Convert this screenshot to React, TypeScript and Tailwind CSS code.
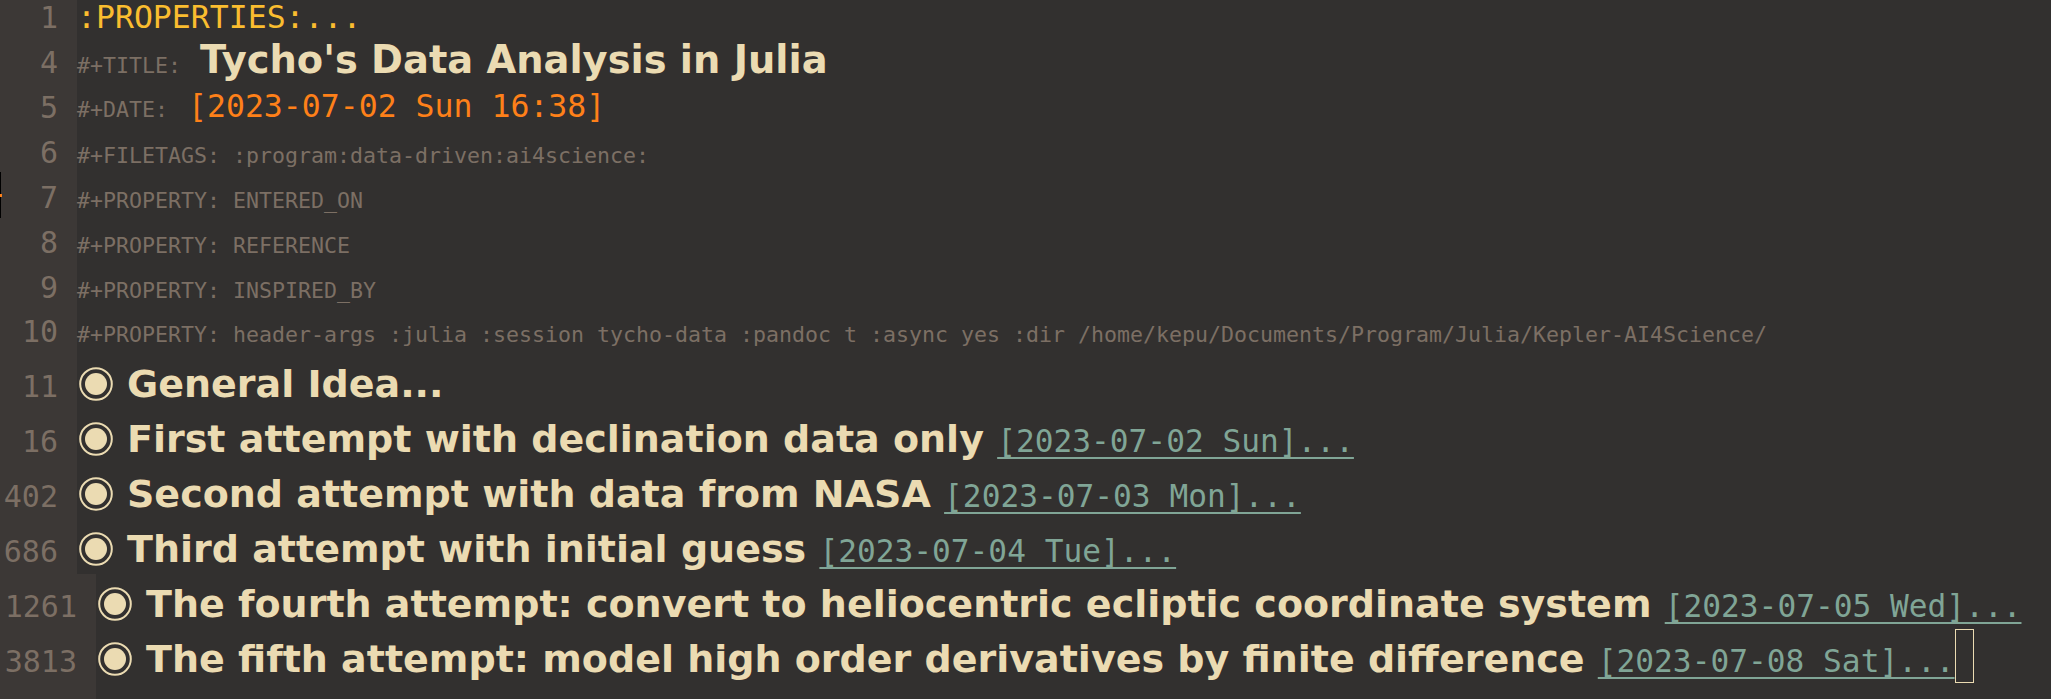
import clsx from "clsx";
import type { ReactNode } from "react";

const mono = "font-['DejaVu_Sans_Mono',monospace]";
const sans = "font-['DejaVu_Sans',sans-serif]";
const meta = clsx("text-[21.6px] text-[#7c6f64]", mono);

type Heading = { n: string; title: string; ts?: string; wide?: boolean; cursor?: boolean };

const headings: Heading[] = [
  { n: "11", title: "General Idea..." },
  { n: "16", title: "First attempt with declination data only", ts: "[2023-07-02 Sun]..." },
  { n: "402", title: "Second attempt with data from NASA", ts: "[2023-07-03 Mon]..." },
  { n: "686", title: "Third attempt with initial guess", ts: "[2023-07-04 Tue]..." },
  {
    n: "1261",
    title: "The fourth attempt: convert to heliocentric ecliptic coordinate system",
    ts: "[2023-07-05 Wed]...",
    wide: true,
  },
  {
    n: "3813",
    title: "The fifth attempt: model high order derivatives by finite difference",
    ts: "[2023-07-08 Sat]...",
    wide: true,
    cursor: true,
  },
];

const props = [
  { n: "6", text: "#+FILETAGS: :program:data-driven:ai4science:" },
  { n: "7", text: "#+PROPERTY: ENTERED_ON" },
  { n: "8", text: "#+PROPERTY: REFERENCE" },
  { n: "9", text: "#+PROPERTY: INSPIRED_BY" },
];

function Row({
  n,
  h,
  gpt,
  cpt,
  wide,
  children,
}: {
  n: string;
  h: string;
  gpt: string;
  cpt: string;
  wide?: boolean;
  children: ReactNode;
}) {
  return (
    <div className={clsx("flex", h)}>
      <div
        className={clsx(
          "shrink-0 bg-[#3c3836] pr-[19px] text-right text-[30px] leading-none text-[#7c6f64]",
          mono,
          wide ? "w-[96px]" : "w-[77px]",
          gpt,
        )}
      >
        {n}
      </div>
      <div className={clsx("min-w-0 flex-1 whitespace-nowrap text-[0px] leading-none", cpt)}>
        {children}
      </div>
    </div>
  );
}

// org-modern style bullet: ring + filled dot
function Bullet() {
  return (
    <svg
      width="34"
      height="34"
      viewBox="0 0 34 34"
      className="ml-[2px] mr-[14px] inline-block align-[-4px]"
    >
      <circle cx="17" cy="17" r="15.8" fill="none" stroke="#ebdbb2" strokeWidth="2" />
      <circle cx="17" cy="17" r="11" fill="#ebdbb2" />
    </svg>
  );
}

export default function App() {
  return (
    <div className="relative flex min-h-screen w-full flex-col overflow-hidden bg-[#32302f]">
      {/* fringe marker */}
      <div className="absolute left-0 top-[172px] h-[46px] w-px bg-black" />
      <div className="absolute left-0 top-[194px] h-[3px] w-[2px] bg-[#fe8019]" />

      <Row n="1" h="h-[45px]" gpt="pt-[3px]" cpt="pt-0">
        <span className={clsx("text-[31.5px] leading-[35px] text-[#fabd2f]", mono)}>
          :PROPERTIES:...
        </span>
      </Row>

      <Row n="4" h="h-[45px]" gpt="pt-[3px]" cpt="mt-[-4px]">
        <span className={meta}>#+TITLE:</span>
        <span className={clsx("ml-[19px] text-[38.4px] font-bold text-[#ebdbb2]", sans)}>
          Tycho's Data Analysis in Julia
        </span>
      </Row>

      <Row n="5" h="h-[45px]" gpt="pt-[3px]" cpt="pt-[1px]">
        <span className={meta}>#+DATE:</span>
        <span className={clsx("ml-[20px] text-[31.5px] text-[#fe8019]", mono)}>
          [2023-07-02 Sun 16:38]
        </span>
      </Row>

      {props.map((p) => (
        <Row key={p.n} n={p.n} h="h-[45px]" gpt="pt-[3px]" cpt="pt-[10px]">
          <span className={meta}>{p.text}</span>
        </Row>
      ))}

      <Row n="10" h="h-[39px]" gpt="pt-[2px]" cpt="pt-[9px]">
        <span className={meta}>
          #+PROPERTY: header-args :julia :session tycho-data :pandoc t :async yes :dir
          /home/kepu/Documents/Program/Julia/Kepler-AI4Science/
        </span>
      </Row>

      {headings.map((hd) => (
        <Row
          key={hd.n}
          n={hd.n}
          h="h-[55px]"
          gpt="pt-[18px]"
          cpt={hd.cursor ? "pt-0" : "pt-[11px]"}
          wide={hd.wide}
        >
          <Bullet />
          <span className={clsx("text-[38px] font-bold text-[#ebdbb2]", sans)}>
            {hd.title}
            {hd.ts ? " " : ""}
          </span>
          {hd.ts && (
            <span
              className={clsx(
                "text-[31.2px] text-[#80a596] underline decoration-[length:1.5px] underline-offset-[5px]",
                mono,
              )}
            >
              {hd.ts}
            </span>
          )}
          {hd.cursor && (
            <span className="inline-block h-[54px] w-[19px] border-[1.5px] border-[#ebdbb2] align-[-11px]" />
          )}
        </Row>
      ))}

      <div className="flex flex-1">
        <div className="w-[96px] bg-[#3c3836]" />
      </div>
    </div>
  );
}
